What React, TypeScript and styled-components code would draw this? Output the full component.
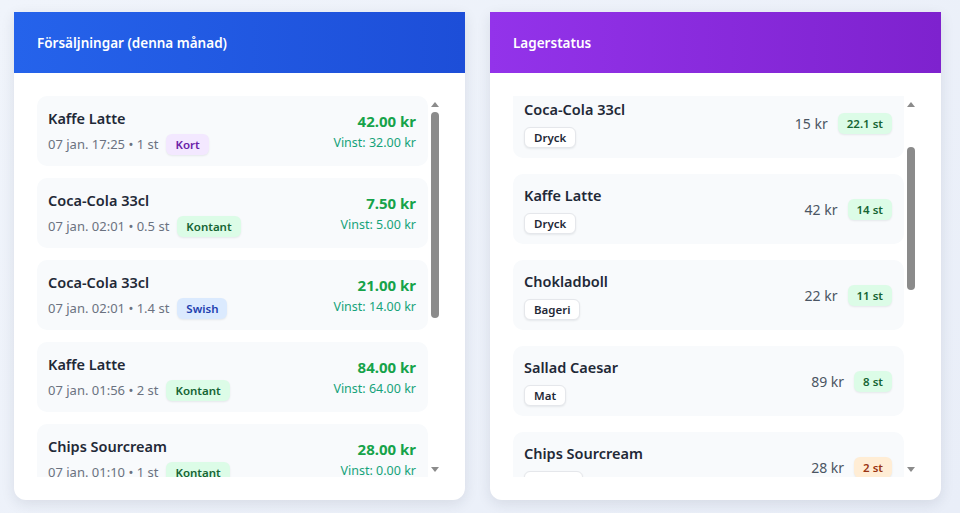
import React, { useEffect, useRef, useState } from 'react'
import styled, { createGlobalStyle, css } from 'styled-components'

const GlobalStyle = createGlobalStyle`
  html, body {
    margin: 0;
    padding: 0;
  }
  body {
    font-family: "Segoe UI", "Noto Sans", "Open Sans", sans-serif;
    background: linear-gradient(135deg, #f0f4fb 0%, #e9eef8 100%);
    min-height: 513px;
    color: #111827;
  }
  * {
    box-sizing: border-box;
  }
`

const Page = styled.main`
  display: grid;
  grid-template-columns: 451px 451px;
  gap: 25px;
  padding: 12px 14px;
`

const Card = styled.section`
  background: #ffffff;
  border-radius: 0 0 12px 12px;
  box-shadow: 0 4px 14px rgba(30, 41, 59, 0.1);
  display: flex;
  flex-direction: column;
  height: 488px;
`

const CardHeader = styled.header<{ $tone: 'blue' | 'purple' }>`
  height: 61px;
  display: flex;
  align-items: center;
  padding: 0 23px;
  color: #ffffff;
  font-size: 13.5px;
  font-weight: 600;
  ${(p) =>
    p.$tone === 'blue'
      ? css`
          background: linear-gradient(90deg, #2563eb 0%, #1d4ed8 100%);
        `
      : css`
          background: linear-gradient(90deg, #9333ea 0%, #7e22ce 100%);
        `}
`

const CardBody = styled.div`
  flex: 1;
  padding: 23px 23px 23px 23px;
  min-height: 0;
`

const ScrollArea = styled.div`
  height: 381px;
  display: flex;
`

const ScrollList = styled.div<{ $gap: number }>`
  flex: 1;
  overflow-y: auto;
  scrollbar-width: none;
  display: flex;
  flex-direction: column;
  gap: ${(p) => p.$gap}px;

  &::-webkit-scrollbar {
    display: none;
  }
`

const ScrollTrack = styled.div`
  width: 14px;
  flex: 0 0 14px;
  display: flex;
  flex-direction: column;
`

const Arrow = styled.div<{ $dir: 'up' | 'down' }>`
  height: 16px;
  display: flex;
  align-items: center;
  justify-content: center;

  &::before {
    content: '';
    width: 0;
    height: 0;
    border-left: 4px solid transparent;
    border-right: 4px solid transparent;
    ${(p) =>
      p.$dir === 'up'
        ? 'border-bottom: 5px solid #8b8b8b;'
        : 'border-top: 5px solid #8b8b8b;'}
  }
`

const Rail = styled.div`
  flex: 1;
  display: flex;
  flex-direction: column;
  align-items: center;
`

const Thumb = styled.div`
  width: 8px;
  border-radius: 4px;
  background: #8b8b8b;
`

const Row = styled.div`
  flex: 0 0 auto;
  height: 70px;
  background: #f8fafc;
  border-radius: 10px;
  padding: 0 12px 0 11px;
  display: flex;
  align-items: center;
  justify-content: space-between;
`

const Info = styled.div`
  display: flex;
  flex-direction: column;
  gap: 6px;
`

const Name = styled.div`
  font-size: 14.5px;
  font-weight: 600;
  color: #1f2937;
  line-height: 20px;
`

const Meta = styled.div`
  display: flex;
  align-items: center;
  gap: 8px;
  font-size: 13px;
  color: #6b7280;
`

type Tone = 'purple' | 'green' | 'blue' | 'orange' | 'red' | 'plain'

const tones: Record<Tone, string> = {
  purple: 'background: #f3e8ff; color: #6b21a8;',
  green: 'background: #dcfce7; color: #166534;',
  blue: 'background: #dbeafe; color: #1e40af;',
  orange: 'background: #ffedd5; color: #9a3412;',
  red: 'background: #fee2e2; color: #991b1b;',
  plain: 'background: #ffffff; color: #1f2937; border: 1px solid #e5e7eb;',
}

const Badge = styled.span<{ $tone: Tone }>`
  display: inline-flex;
  align-items: center;
  height: 21px;
  padding: 0 9px;
  border-radius: 6px;
  font-size: 11.5px;
  font-weight: 600;
  box-shadow: 0 1px 2px rgba(15, 23, 42, 0.08);
  ${(p) => tones[p.$tone]}
`

const Amounts = styled.div`
  display: flex;
  flex-direction: column;
  align-items: flex-end;
  gap: 3px;
`

const Amount = styled.div`
  font-size: 15px;
  font-weight: 700;
  color: #16a34a;
  line-height: 20px;
`

const Profit = styled.div`
  font-size: 12.5px;
  color: #16a37a;
  line-height: 18px;
`

const Stock = styled.div`
  display: flex;
  align-items: center;
  gap: 10px;
`

const Price = styled.span`
  font-size: 14px;
  color: #4b5563;
`

type Sale = {
  name: string
  time: string
  qty: string
  method: string
  tone: Tone
  amount: string
  profit: string
}

const sales: Sale[] = [
  { name: 'Kaffe Latte', time: '07 jan. 17:25', qty: '1 st', method: 'Kort', tone: 'purple', amount: '42.00 kr', profit: '32.00 kr' },
  { name: 'Coca-Cola 33cl', time: '07 jan. 02:01', qty: '0.5 st', method: 'Kontant', tone: 'green', amount: '7.50 kr', profit: '5.00 kr' },
  { name: 'Coca-Cola 33cl', time: '07 jan. 02:01', qty: '1.4 st', method: 'Swish', tone: 'blue', amount: '21.00 kr', profit: '14.00 kr' },
  { name: 'Kaffe Latte', time: '07 jan. 01:56', qty: '2 st', method: 'Kontant', tone: 'green', amount: '84.00 kr', profit: '64.00 kr' },
  { name: 'Chips Sourcream', time: '07 jan. 01:10', qty: '1 st', method: 'Kontant', tone: 'green', amount: '28.00 kr', profit: '0.00 kr' },
  { name: 'Chokladboll', time: '06 jan. 16:42', qty: '3 st', method: 'Swish', tone: 'blue', amount: '66.00 kr', profit: '42.00 kr' },
  { name: 'Sallad Caesar', time: '06 jan. 12:15', qty: '1 st', method: 'Kort', tone: 'purple', amount: '89.00 kr', profit: '35.00 kr' },
  { name: 'Kaffe Latte', time: '05 jan. 09:30', qty: '1 st', method: 'Kontant', tone: 'green', amount: '42.00 kr', profit: '32.00 kr' },
]

type Item = {
  name: string
  category: string
  price: string
  stock: string
  tone: Tone
}

const stock: Item[] = [
  { name: 'Kanelbulle', category: 'Bageri', price: '25 kr', stock: '30 st', tone: 'green' },
  { name: 'Coca-Cola 33cl', category: 'Dryck', price: '15 kr', stock: '22.1 st', tone: 'green' },
  { name: 'Kaffe Latte', category: 'Dryck', price: '42 kr', stock: '14 st', tone: 'green' },
  { name: 'Chokladboll', category: 'Bageri', price: '22 kr', stock: '11 st', tone: 'green' },
  { name: 'Sallad Caesar', category: 'Mat', price: '89 kr', stock: '8 st', tone: 'green' },
  { name: 'Chips Sourcream', category: 'Snacks', price: '28 kr', stock: '2 st', tone: 'orange' },
  { name: 'Mineralvatten', category: 'Dryck', price: '18 kr', stock: '1 st', tone: 'orange' },
  { name: 'Smörgås Ost', category: 'Mat', price: '45 kr', stock: '0 st', tone: 'red' },
  { name: 'Te', category: 'Dryck', price: '20 kr', stock: '0 st', tone: 'red' },
  { name: 'Muffins', category: 'Bageri', price: '30 kr', stock: '0 st', tone: 'red' },
  { name: 'Godis', category: 'Snacks', price: '12 kr', stock: '0 st', tone: 'red' },
]

// list with a drawn scrollbar beside it (arrows + thumb)
const Scroller: React.FC<{ gap: number; start?: number; children: React.ReactNode }> = ({
  gap,
  start = 0,
  children,
}) => {
  const listRef = useRef<HTMLDivElement>(null)
  const railRef = useRef<HTMLDivElement>(null)
  const [thumb, setThumb] = useState({ top: 0, height: 0 })

  const measure = () => {
    const list = listRef.current
    const rail = railRef.current
    if (!list || !rail) return
    const railH = rail.clientHeight
    const ratio = list.clientHeight / list.scrollHeight
    setThumb({
      top: (list.scrollTop / list.scrollHeight) * railH,
      height: Math.min(railH, ratio * railH),
    })
  }

  useEffect(() => {
    if (listRef.current) listRef.current.scrollTop = start
    measure()
  }, [start])

  return (
    <ScrollArea>
      <ScrollList $gap={gap} ref={listRef} onScroll={measure}>
        {children}
      </ScrollList>
      <ScrollTrack>
        <Arrow $dir="up" />
        <Rail ref={railRef}>
          <Thumb style={{ marginTop: thumb.top, height: thumb.height }} />
        </Rail>
        <Arrow $dir="down" />
      </ScrollTrack>
    </ScrollArea>
  )
}

export default function App() {
  return (
    <>
      <GlobalStyle />
      <Page>
        <Card>
          <CardHeader $tone="blue">Försäljningar (denna månad)</CardHeader>
          <CardBody>
            <Scroller gap={12}>
              {sales.map((s, i) => (
                <Row key={i}>
                  <Info>
                    <Name>{s.name}</Name>
                    <Meta>
                      <span>
                        {s.time} • {s.qty}
                      </span>
                      <Badge $tone={s.tone}>{s.method}</Badge>
                    </Meta>
                  </Info>
                  <Amounts>
                    <Amount>{s.amount}</Amount>
                    <Profit>Vinst: {s.profit}</Profit>
                  </Amounts>
                </Row>
              ))}
            </Scroller>
          </CardBody>
        </Card>
        <Card>
          <CardHeader $tone="purple">Lagerstatus</CardHeader>
          <CardBody>
            <Scroller gap={16} start={94}>
              {stock.map((it, i) => (
                <Row key={i}>
                  <Info>
                    <Name>{it.name}</Name>
                    <div>
                      <Badge $tone="plain">{it.category}</Badge>
                    </div>
                  </Info>
                  <Stock>
                    <Price>{it.price}</Price>
                    <Badge $tone={it.tone}>{it.stock}</Badge>
                  </Stock>
                </Row>
              ))}
            </Scroller>
          </CardBody>
        </Card>
      </Page>
    </>
  )
}
